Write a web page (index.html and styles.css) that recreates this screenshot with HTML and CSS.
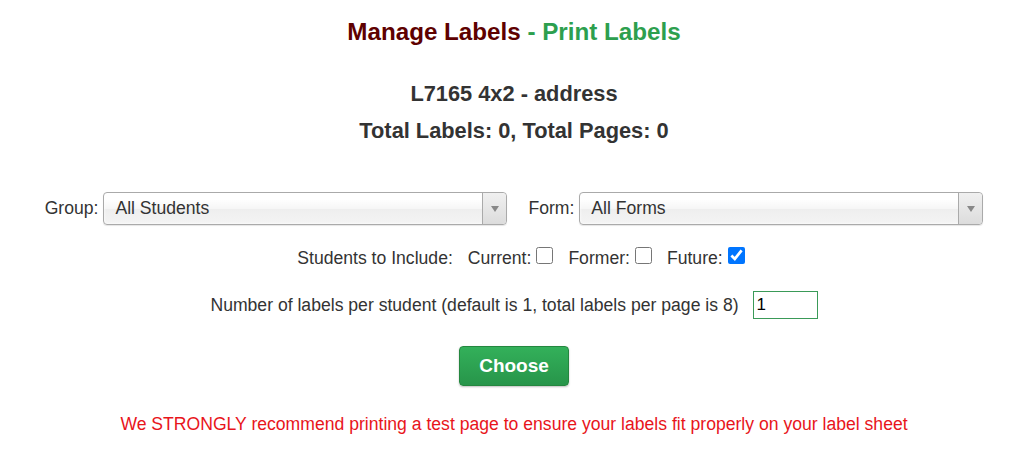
FILE: index.html
```html
<!DOCTYPE html>
<html lang="en">
<head>
    <meta charset="UTF-8">
    <meta name="viewport" content="width=device-width, initial-scale=1.0">
    <title>Print Labels</title>
    <link rel="stylesheet" href="styles.css">
</head>
<body>
    <div class="page">
        <h1 class="page-title">
            <span class="title-main">Manage Labels</span>
            <span class="title-sub">- Print Labels</span>
        </h1>

        <div class="summary">
            <div class="summary-line">L7165 4x2 - address</div>
            <div class="summary-line">Total Labels: 0, Total Pages: 0</div>
        </div>

        <div class="filters">
            <label class="field">
                <span class="field-label">Group:</span>
                <div class="chosen">
                    <span class="chosen-value">All Students</span>
                    <span class="chosen-arrow"></span>
                </div>
            </label>
            <label class="field">
                <span class="field-label">Form:</span>
                <div class="chosen">
                    <span class="chosen-value">All Forms</span>
                    <span class="chosen-arrow"></span>
                </div>
            </label>
        </div>

        <div class="include-row">
            <span class="include-label">Students to Include:</span>
            <label class="check">Current:<input type="checkbox"></label>
            <label class="check">Former:<input type="checkbox"></label>
            <label class="check">Future:<input type="checkbox" checked></label>
        </div>

        <div class="count-row">
            <span>Number of labels per student (default is 1, total labels per page is 8)</span>
            <input class="count-input" type="text" value="1">
        </div>

        <div class="actions">
            <button class="btn-choose">Choose</button>
        </div>

        <p class="warning">We STRONGLY recommend printing a test page to ensure your labels fit properly on your label sheet</p>
    </div>
</body>
</html>
```

FILE: styles.css
```css
body, html {
    margin: 0;
    padding: 0;
    background: #fff;
}
.page {
    width: 1009px;
    padding-left: 19px;
    box-sizing: border-box;
    font-family: "Liberation Sans", Arial, sans-serif;
    font-size: 17.6px;
    color: #333;
    text-align: center;
}
.page-title {
    margin: 0;
    padding-top: 17px;
    font-size: 24.2px;
    line-height: 30px;
    font-weight: bold;
}
.title-main {
    color: #5e0000;
}
.title-sub {
    color: #2d9f4e;
}
.summary {
    margin-top: 28px;
    font-size: 21.8px;
    font-weight: bold;
    color: #333;
}
.summary-line {
    line-height: 37px;
}
.filters {
    display: flex;
    justify-content: center;
    gap: 21px;
    margin-top: 43px;
}
.field {
    display: flex;
    align-items: center;
    gap: 5px;
}
.chosen {
    display: flex;
    align-items: center;
    width: 402px;
    height: 31px;
    border: 1px solid #aaa;
    border-radius: 4px;
    background: linear-gradient(#ffffff 20%, #f6f6f6 50%, #eeeeee 52%, #f4f4f4 100%);
    box-shadow: 0 0 3px #fff inset, 0 1px 1px rgba(0,0,0,0.1);
    text-align: left;
}
.chosen-value {
    flex: 1;
    padding-left: 11px;
    color: #333;
}
.chosen-arrow {
    width: 23px;
    height: 100%;
    border-left: 1px solid #aaa;
    border-radius: 0 4px 4px 0;
    background: linear-gradient(#f0f0f0, #dcdcdc);
    display: flex;
    align-items: center;
    justify-content: center;
}
.chosen-arrow::after {
    content: "";
    border-left: 4px solid transparent;
    border-right: 4px solid transparent;
    border-top: 6px solid #888;
}
.include-row {
    display: flex;
    justify-content: center;
    align-items: center;
    gap: 15px;
    margin-top: 22px;
    padding-left: 14px;
    line-height: 22px;
}
.check {
    display: flex;
    align-items: center;
}
.check input {
    width: 17px;
    height: 17px;
    margin: 0 0 5px 5px;
    accent-color: #0075ff;
}
.count-row {
    display: flex;
    justify-content: center;
    align-items: center;
    gap: 14px;
    margin-top: 22px;
}
.count-input {
    width: 57px;
    height: 26px;
    padding: 0 3px;
    border: 1px solid #3a9a58;
    font-family: "Liberation Sans", Arial, sans-serif;
    font-size: 17px;
    color: #000;
    box-sizing: content-box;
}
.actions {
    margin-top: 27px;
}
.btn-choose {
    width: 110px;
    height: 40px;
    border: 1px solid #24873f;
    border-radius: 4px;
    background: linear-gradient(#33b05a, #27954a);
    color: #fff;
    font-family: "Liberation Sans", Arial, sans-serif;
    font-size: 19px;
    font-weight: bold;
    box-shadow: 0 1px 2px rgba(0,0,0,0.25);
    cursor: pointer;
}
.warning {
    margin: 28px 0 0;
    color: #e8151b;
    font-size: 17.6px;
}
```
